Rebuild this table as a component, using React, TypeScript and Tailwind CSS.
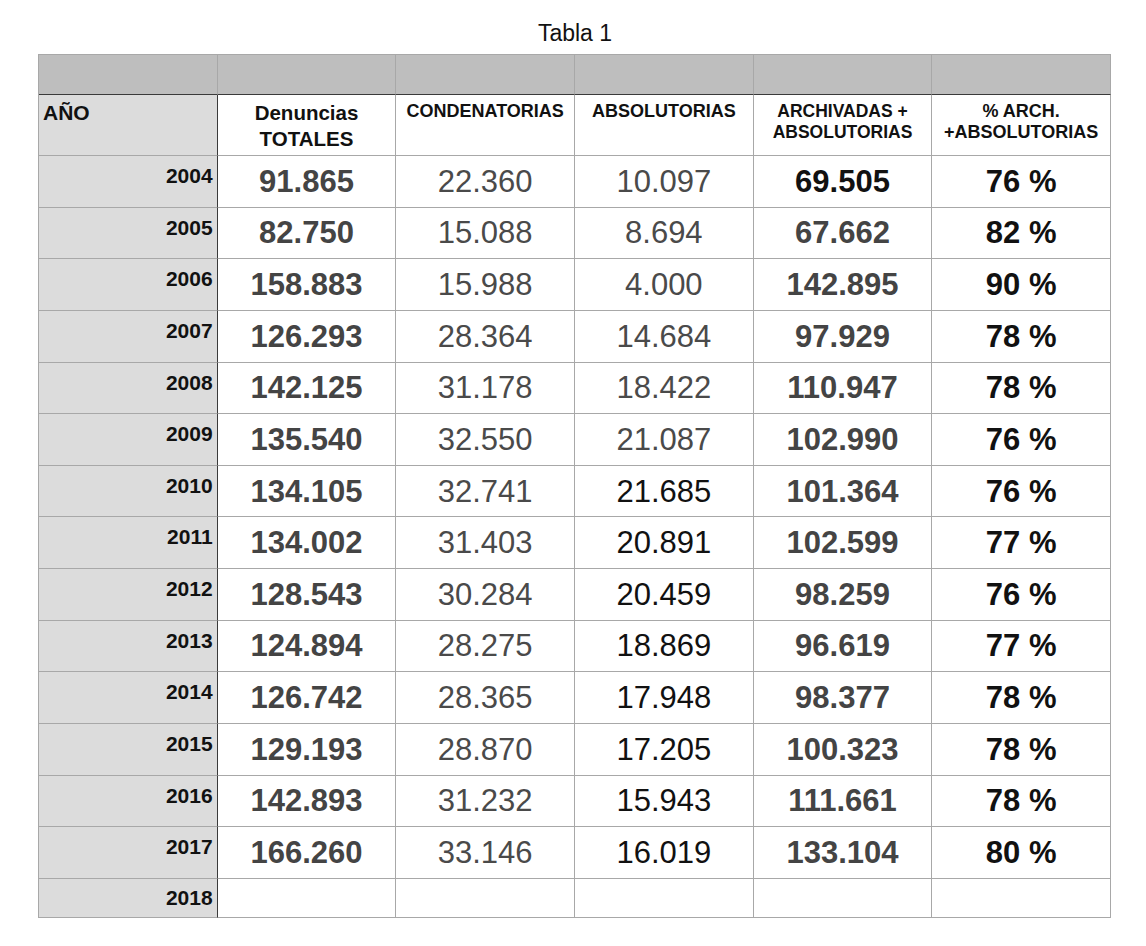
import React from "react";

// Filas de la tabla: año, denuncias totales, condenatorias, absolutorias, archivadas + absolutorias, %
const rows: [string, string, string, string, string, string][] = [
  ["2004", "91.865", "22.360", "10.097", "69.505", "76 %"],
  ["2005", "82.750", "15.088", "8.694", "67.662", "82 %"],
  ["2006", "158.883", "15.988", "4.000", "142.895", "90 %"],
  ["2007", "126.293", "28.364", "14.684", "97.929", "78 %"],
  ["2008", "142.125", "31.178", "18.422", "110.947", "78 %"],
  ["2009", "135.540", "32.550", "21.087", "102.990", "76 %"],
  ["2010", "134.105", "32.741", "21.685", "101.364", "76 %"],
  ["2011", "134.002", "31.403", "20.891", "102.599", "77 %"],
  ["2012", "128.543", "30.284", "20.459", "98.259", "76 %"],
  ["2013", "124.894", "28.275", "18.869", "96.619", "77 %"],
  ["2014", "126.742", "28.365", "17.948", "98.377", "78 %"],
  ["2015", "129.193", "28.870", "17.205", "100.323", "78 %"],
  ["2016", "142.893", "31.232", "15.943", "111.661", "78 %"],
  ["2017", "166.260", "33.146", "16.019", "133.104", "80 %"],
];

const cell = "border-r border-b border-[#a8a8a8]";
const yearCell = "border-r border-b border-b-[#a8a8a8] border-r-[#3a3a3a] bg-[#dcdcdc]";

function DataRow({ row, index }: { row: (typeof rows)[number]; index: number }) {
  const [year, total, cond, abs, arch, pct] = row;
  const absColor = index < 6 ? "text-[#4a4a4a]" : "text-[#111]";
  const archColor = index === 0 ? "text-[#111]" : "text-[#444]";
  return (
    <>
      <div className={`${yearCell} h-[51.64px] flex justify-end items-start pt-2 pr-[4px] text-[21px] leading-[24px] font-bold text-[#111]`}>
        {year}
      </div>
      <div className={`${cell} h-[51.64px] flex items-center justify-center text-[31px] leading-none font-bold text-[#444]`}>
        {total}
      </div>
      <div className={`${cell} h-[51.64px] flex items-center justify-center text-[31px] leading-none text-[#4a4a4a]`}>
        {cond}
      </div>
      <div className={`${cell} h-[51.64px] flex items-center justify-center text-[31px] leading-none ${absColor}`}>
        {abs}
      </div>
      <div className={`${cell} h-[51.64px] flex items-center justify-center text-[31px] leading-none font-bold ${archColor}`}>
        {arch}
      </div>
      <div className={`${cell} h-[51.64px] flex items-center justify-center text-[31px] leading-none font-bold text-[#111]`}>
        {pct}
      </div>
    </>
  );
}

export default function App() {
  return (
    <div className="w-[1146px] h-[946px] bg-white font-['Liberation_Sans',Arial,sans-serif] text-[#111]">
      <div className="pt-[22px] text-center text-[23px] leading-[22px] pl-[4px]">Tabla 1</div>

      <div className="mt-[10px] ml-[38px] w-[1073px] grid grid-cols-6 border-l border-t border-[#a8a8a8]">
        {/* Fila gris superior */}
        {Array.from({ length: 6 }).map((_, i) => (
          <div key={`top-${i}`} className="h-[40px] bg-[#bebebe] border-r border-r-[#a8a8a8] border-b border-b-[#3a3a3a]" />
        ))}

        {/* Encabezados */}
        <div className={`${yearCell} h-[61px] pt-[5px] pl-[4px] text-[21px] leading-[25px] font-bold`}>AÑO</div>
        <div className={`${cell} h-[61px] pt-[5px] text-center text-[20.5px] leading-[25.5px] font-bold`}>
          Denuncias
          <br />
          TOTALES
        </div>
        <div className={`${cell} h-[61px] pt-[6px] text-center text-[18px] leading-[21px] font-bold`}>CONDENATORIAS</div>
        <div className={`${cell} h-[61px] pt-[6px] text-center text-[18px] leading-[21px] font-bold`}>ABSOLUTORIAS</div>
        <div className={`${cell} h-[61px] pt-[6px] text-center text-[17.5px] leading-[21px] font-bold`}>
          ARCHIVADAS +
          <br />
          ABSOLUTORIAS
        </div>
        <div className={`${cell} h-[61px] pt-[6px] text-center text-[18px] leading-[21px] font-bold`}>
          % ARCH.
          <br />
          +ABSOLUTORIAS
        </div>

        {rows.map((row, i) => (
          <DataRow key={row[0]} row={row} index={i} />
        ))}

        {/* 2018 sin datos */}
        <div className={`${yearCell} h-[39px] flex justify-end items-start pt-[7px] pr-[4px] text-[21px] leading-[24px] font-bold`}>
          2018
        </div>
        {Array.from({ length: 5 }).map((_, i) => (
          <div key={`empty-${i}`} className={`${cell} h-[39px]`} />
        ))}
      </div>
    </div>
  );
}
